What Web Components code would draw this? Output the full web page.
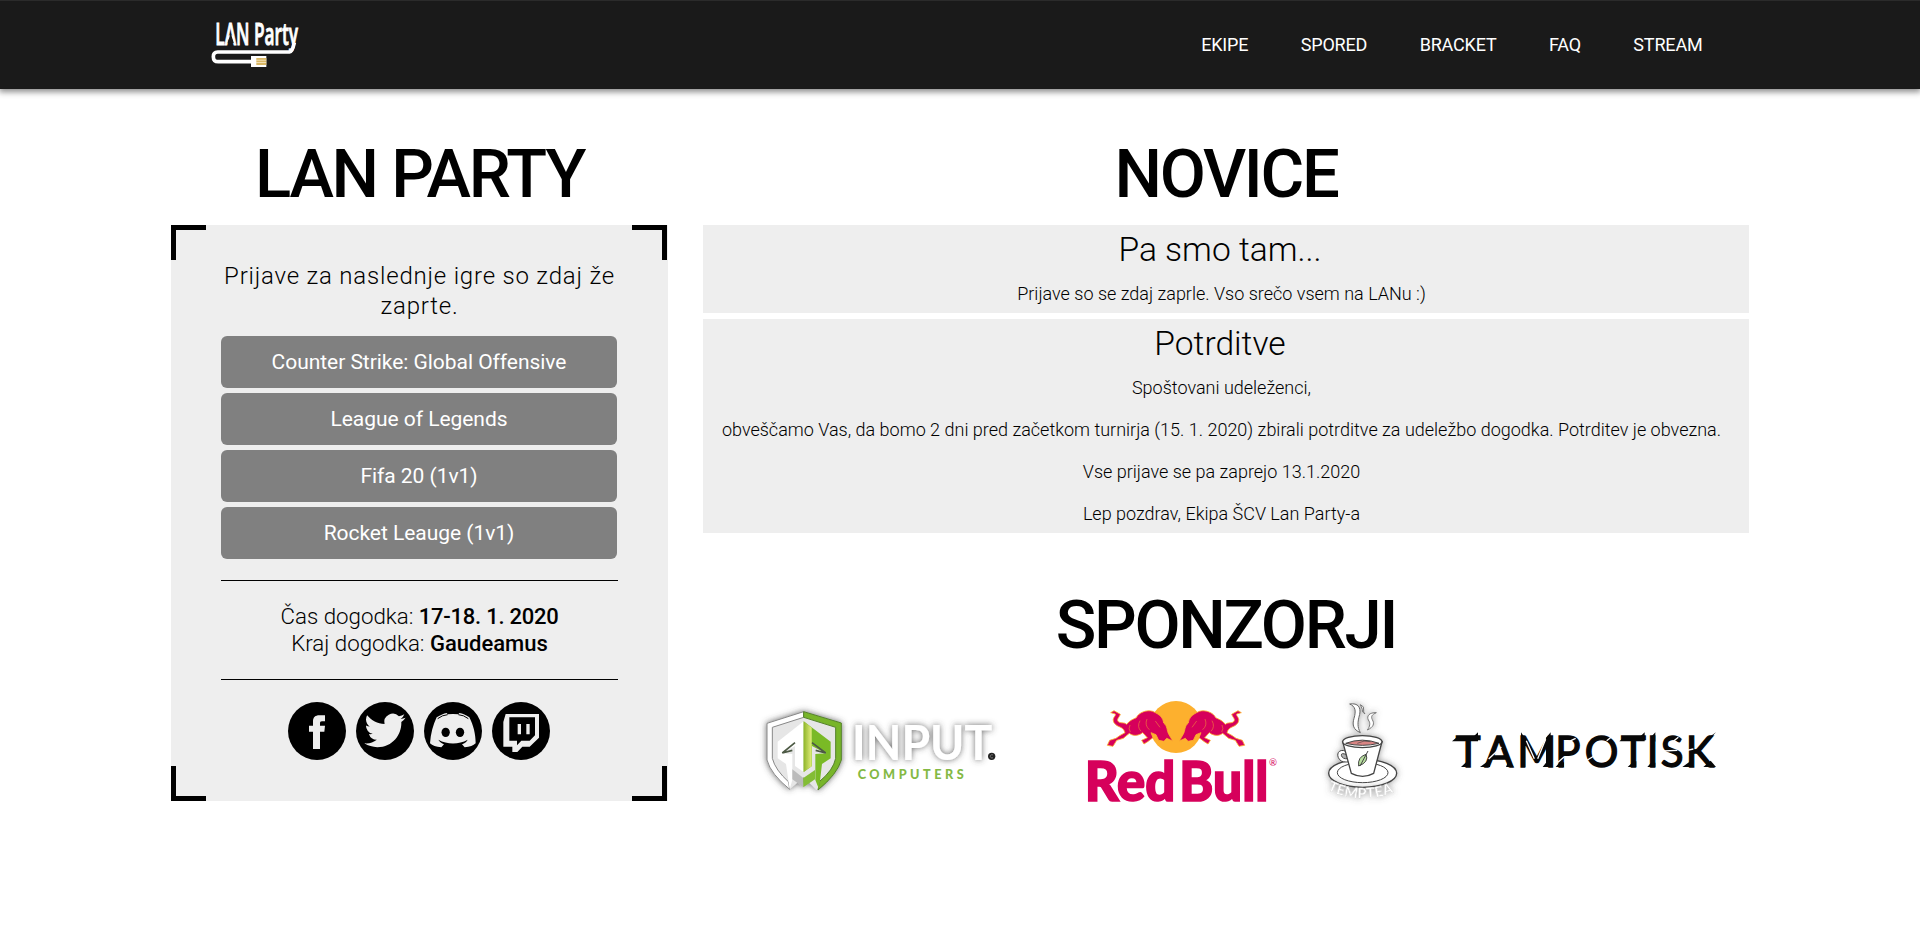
<!DOCTYPE html>
<html lang="sl">
<head>
<meta charset="utf-8">
<title>LAN Party</title>
<style>
body{margin:0;background:#fff;color:#000;font-family:Roboto,"Liberation Sans",sans-serif}
</style>
</head>
<body>
<lan-page></lan-page>
<script>
const define=(name,html)=>{
  const t=document.createElement('template');t.innerHTML=html;
  customElements.define(name,class extends HTMLElement{
    constructor(){super();this.attachShadow({mode:'open'}).appendChild(t.content.cloneNode(true));}
  });
};

define('lan-logo',`<style>:host{display:block;width:130px;height:88px}svg{display:block;overflow:visible}</style>
<svg width="130" height="88" viewBox="0 0 390 264">
<text x="76" y="136" font-family="Open Sans" font-weight="600" font-size="94" fill="#fff" stroke="#fff" stroke-width="3" textLength="248" lengthAdjust="spacingAndGlyphs">LAN Party</text>
<path d="M122 98L113 129H131Z" fill="#1a1a1a"/>
<path d="M313 128Q307 156 299 156H83Q70 156 70 170Q70 185 85 185H186" fill="none" stroke="#fff" stroke-width="11"/>
<rect x="183" y="168" width="46" height="33" fill="#fff"/>
<path d="M199 174h30v6h-30zM199 181h30v6h-30zM199 188h30v7h-30z" fill="#d9b765"/>
<path d="M199 180.500h30M199 187.500h30" stroke="#f4e3b5" stroke-width="2"/>
</svg>`);

define('nav-link',`<style>:host{display:block;font-size:18px;line-height:22px;color:#fff;letter-spacing:-.17px}</style><slot></slot>`);

define('site-header',`<style>
:host{display:flex;box-sizing:border-box;height:89px;background:#1a1a1a;border-top:1px solid #2b2b2b;box-shadow:0 2px 6px 1px rgba(0,0,0,.45);justify-content:space-between;padding:0 217.500px 0 190px}
nav{display:flex;gap:52.4px;padding-top:33px}
lan-logo{margin-top:-1px}
</style><lan-logo></lan-logo><nav><slot></slot></nav>`);

define('section-title',`<style>:host{display:block;text-align:center}
h1{margin:0;font-size:67px;line-height:80px;font-weight:500;letter-spacing:-2.3px}</style><h1><slot></slot></h1>`);

define('game-button',`<style>:host{display:block;height:51.5px;box-sizing:border-box;background:#808080;border-radius:6px;color:#fff;font-size:21px;line-height:53px;letter-spacing:-.04px;text-align:center}</style><slot></slot>`);

define('social-icon',`<style>:host{display:block;width:58px;height:58px}::slotted(svg){display:block;width:58px;height:58px}</style><slot></slot>`);

define('event-card',`<style>
:host{display:block;position:relative;box-sizing:border-box;height:576px;background:#eee;padding:36px 50px 0;text-align:center}
i{position:absolute;width:35px;height:35px;box-sizing:border-box;border:0 solid #000}
.a{left:0;top:0;border-width:5px 0 0 5px}.b{right:1px;top:0;border-width:5px 5px 0 0}
.c{left:0;bottom:0;border-width:0 0 5px 5px}.d{right:1px;bottom:0;border-width:0 5px 5px 0}
.intro{margin:0 -2px 15px;font-size:24px;line-height:30px;letter-spacing:.8px;font-weight:300}
.games{display:grid;gap:5.5px;margin-right:1px}
hr{border:0;height:1px;background:#000;margin:21.500px 0 0}
.info{font-size:22.3px;line-height:27px;margin:22px 0;font-weight:300}
hr.two{margin:0}
.soc{display:flex;gap:10px;justify-content:center;margin:22px 2px 0 0}
</style><i class="a"></i><i class="b"></i><i class="c"></i><i class="d"></i>
<div class="intro"><slot name="intro"></slot></div>
<div class="games"><slot name="game"></slot></div><hr>
<div class="info"><slot name="info"></slot></div><hr class="two">
<div class="soc"><slot name="social"></slot></div>`);

define('news-item',`<style>
:host{display:block;background:#eee;padding:6px 9px 8px 0;text-align:center;font-size:18px;line-height:22px;font-weight:300}
h2{margin:0 3px 14px 0;font-size:33.6px;line-height:38px;font-weight:300}
.body{display:grid;gap:20px}::slotted(p){margin:0}
</style><h2><slot name="title"></slot></h2><div class="body"><slot></slot></div>`);

define('sponsor-row',`<style>:host{display:flex;margin:25px 0 0 47px}svg{display:block;flex:none;overflow:visible}.rb{margin:0 10px 0 60px}</style>
<svg width="260" height="120" viewBox="0 0 780 360">
<defs><filter id="g" x="-20%" y="-20%" width="140%" height="140%"><feDropShadow dx="0" dy="0" stdDeviation="9" flood-color="#444" flood-opacity=".8"/></filter>
<linearGradient id="l"><stop offset="0" stop-color="#8fb52a"/><stop offset="1" stop-color="#e2ee7b"/></linearGradient></defs>
<g filter="url(#g)">
<path d="M161 65L51 100V210Q62 252 119 298L161 262L200 300Q265 250 274 210V99Z" fill="#e6e6e6"/>
<path d="M161 65L51 100V210Q62 252 119 298L116 276Q76 240 67 205V112L161 82Z" fill="#fff" stroke="#888" stroke-width="3"/>
<path d="M161 65L274 99V210Q262 252 204 300L209 274Q250 240 257 205V112L161 82Z" fill="#78b52b" stroke="#55812a" stroke-width="3"/>
<path d="M161 94L83 155V205L108 222L119 298L127 270V192L97 190L135 168V228L161 246Z" fill="#fff"/>
<path d="M161 94L242 155V205L216 222L207 298L196 270V192L227 190L186 168V228L161 246Z" fill="#7aba28"/>
<path d="M161 94V246L185 229V113Z" fill="url(#l)"/>
<path d="M135 158L97 189L127 181M186 158L227 189L197 181" fill="none" stroke="#4d5a45" stroke-width="5"/>
<path d="M127 238L160 264V292L127 268Z" fill="#bbb"/><path d="M160 264L195 240V268L160 292Z" fill="#83bd36"/>
</g>
<g filter="url(#g)"><text x="306" y="210" font-family="Lato" font-weight="700" font-size="145" fill="#fff" textLength="421" lengthAdjust="spacingAndGlyphs">INPUT</text></g>
<circle cx="725" cy="199" r="11" fill="#222"/><path d="M729 195a5 5 0 1 0 0 8" fill="none" stroke="#999" stroke-width="2"/>
<text x="323" y="267" font-family="Lato" font-weight="900" font-size="38" fill="#84b944" textLength="318">COMPUTERS</text>
</svg>
<svg class="rb" width="220" height="120" viewBox="0 0 660 360">
<circle cx="318" cy="111" r="78" fill="#fdb02e"/>
<g fill="#d6005b" stroke="#fdb02e" stroke-width="2.500">
<path d="M165 128C160 108 143 114 132 98C124 84 139 78 136 72L122 68L132 62L151 73C147 84 138 88 146 96C156 101 163 96 170 103C178 92 188 88 199 83C205 68 231 58 248 64C270 74 279 83 281 99C293 108 290 122 296 132Q302 143 309 154Q298 148 290 145L282 154L266 151L258 134L243 128L249 143L233 155L222 162L215 151L232 143L218 128C204 139 187 138 178 130L160 145L140 151L129 169L112 166L119 151L138 145L149 137Z"/>
<path d="M210 92Q200 110 213 124M231 87Q223 106 238 119M180 105Q174 117 181 126M256 93L270 112" fill="none" stroke="#ef7b3d" stroke-width="2"/>
</g>
<g fill="#d6005b" stroke="#fdb02e" stroke-width="2.500" transform="matrix(-1 0 0 1 636 0)">
<path d="M165 128C160 108 143 114 132 98C124 84 139 78 136 72L122 68L132 62L151 73C147 84 138 88 146 96C156 101 163 96 170 103C178 92 188 88 199 83C205 68 231 58 248 64C270 74 279 83 281 99C293 108 290 122 296 132Q302 143 309 154Q298 148 290 145L282 154L266 151L258 134L243 128L249 143L233 155L222 162L215 151L232 143L218 128C204 139 187 138 178 130L160 145L140 151L129 169L112 166L119 151L138 145L149 137Z"/>
<path d="M210 92Q200 110 213 124M231 87Q223 106 238 119M180 105Q174 117 181 126M256 93L270 112" fill="none" stroke="#ef7b3d" stroke-width="2"/>
</g>
<g font-family="Lato" font-weight="900" font-size="164" fill="#d6005b" stroke="#d6005b" stroke-width="5"><text x="44" y="332" textLength="272" lengthAdjust="spacingAndGlyphs">Red</text><text x="328" y="332" textLength="267" lengthAdjust="spacingAndGlyphs">Bull</text></g>
<text x="597" y="228" font-family="Lato" font-size="30" fill="#d6005b" textLength="24" lengthAdjust="spacingAndGlyphs">®</text>
</svg>
<svg width="130" height="120" viewBox="0 0 390 360">
<defs><filter id="h" x="-20%" y="-20%" width="140%" height="140%"><feDropShadow dx="0" dy="0" stdDeviation="9" flood-color="#555" flood-opacity=".6"/></filter></defs>
<g filter="url(#h)" fill="#fff" stroke="#444" stroke-width="4">
<ellipse cx="188" cy="250" rx="102" ry="42"/><ellipse cx="188" cy="248" rx="76" ry="30" stroke-width="3"/>
<path d="M138 184C116 174 106 194 119 209Q128 219 148 215L144 206Q127 208 124 196Q123 187 140 194Z" stroke-width="3"/>
<path d="M128 155L154 250Q188 268 221 250L246 155Z"/><ellipse cx="187" cy="155" rx="59" ry="18"/>
<path d="M137 160Q187 141 237 160Q187 172 137 160Z" fill="#d98584" stroke-width="3"/><path d="M172 160Q192 149 212 155" fill="none" stroke-width="2"/>
<path d="M149 42C175 38 183 53 179 73C172 98 172 111 181 128C160 119 156 105 162 85C169 62 166 49 149 42Z" stroke-width="3" stroke="#666"/>
<path d="M229 68C208 67 199 78 205 90C212 99 210 109 202 120C221 111 224 101 217 89C212 79 216 74 229 68ZM181 44Q194 49 191 60Q189 66 195 72Q184 66 187 58Z" stroke-width="3" stroke="#777"/>
<path d="M176 228Q172 201 198 193Q208 216 176 228Z" fill="#b8dfa0" stroke-width="3"/><path d="M180 228L204 183" fill="none" stroke-width="3"/>
</g>
<g filter="url(#h)" fill="#fff" stroke="#ccc" stroke-width="1" font-family="Lato" font-weight="700" font-size="43">
<path id="arc" d="M82 300Q188 350 298 300" fill="none" stroke="none"/><text textLength="205"><textPath href="#arc">TEMPTEA</textPath></text></g>
</svg>
<svg width="300" height="100" viewBox="0 0 900 300" style="margin-top:10px">
<g font-family="Lato" font-weight="400" font-size="126" fill="#080808" stroke="#080808" stroke-width="4">
<text y="200" x="77 164 262 376 464 573 650 692 767">TAMPOTISK</text></g>
<g fill="#080808"><path d="M66 124L82 110H130L144 97V124ZM568 124L584 110H630L644 97V124ZM93 201L111 184H119V201ZM593 201L611 184H619V201ZM150 201L180 179V201ZM236 180L251 201H228ZM377 201L389 187H402V201ZM652 201L663 188H676V201ZM664 110L676 97V125ZM757 201L782 183V201ZM820 201L842 182L858 201ZM818 125L858 97L832 124ZM273 112V97L286 116V201H273ZM348 113L362 97V201H338L348 188Z"/></g>
<g stroke="#fff" stroke-width="4" fill="none"><path d="M176 177L214 141M289 122L313 176M347 118L323 176M410 128L437 115M472 180L492 168M530 122L548 108M698 153L742 151M771 151L790 147M384 187L402 171M728 125L745 112"/></g>
</svg>`);

define('lan-page',`<style>
:host{display:block;min-height:938px}
main{display:flex;gap:35px;padding:45px 171px 0}
aside{width:497px}.right{width:1046px}
section-title{margin-bottom:11px}
.news{display:grid;gap:6px}
.sp{margin:52px 0 0;display:block}
b{font-weight:500;font-size:22px}.date{letter-spacing:-.25px}
</style>
<site-header><nav-link>EKIPE</nav-link><nav-link>SPORED</nav-link><nav-link>BRACKET</nav-link><nav-link>FAQ</nav-link><nav-link>STREAM</nav-link></site-header>
<main>
<aside><section-title>LAN PARTY</section-title>
<event-card>
<span slot="intro">Prijave za naslednje igre so zdaj že zaprte.</span>
<game-button slot="game">Counter Strike: Global Offensive</game-button>
<game-button slot="game">League of Legends</game-button>
<game-button slot="game">Fifa 20 (1v1)</game-button>
<game-button slot="game">Rocket Leauge (1v1)</game-button>
<span slot="info">Čas dogodka: <b class="date">17-18. 1. 2020</b><br>Kraj dogodka: <b>Gaudeamus</b></span>
<social-icon slot="social"><svg viewBox="0 0 174 174"><circle cx="87" cy="87" r="87"/><path fill="#eee" d="M75 141V89H63V71H75V58C75 46 82 40 94 40H111V58H102C97 58 96 60 96 65V71H111L109 89H96V141Z"/></svg></social-icon>
<social-icon slot="social"><svg viewBox="0 0 174 174"><circle cx="87" cy="87" r="87"/><path fill="#eee" transform="translate(25 23.400) scale(5.150)" d="M23.953 4.57a10 10 0 01-2.825.775 4.958 4.958 0 002.163-2.723c-.951.555-2.005.959-3.127 1.184a4.92 4.92 0 00-8.384 4.482C7.69 8.095 4.067 6.13 1.64 3.162a4.822 4.822 0 00-.666 2.475c0 1.71.87 3.213 2.188 4.096a4.904 4.904 0 01-2.228-.616v.06a4.923 4.923 0 003.946 4.827 4.996 4.996 0 01-2.212.085 4.936 4.936 0 004.604 3.417 9.867 9.867 0 01-6.102 2.105c-.39 0-.779-.023-1.17-.067a13.995 13.995 0 007.557 2.209c9.053 0 13.998-7.496 13.998-13.985 0-.21 0-.42-.015-.63A9.935 9.935 0 0024 4.59z"/></svg></social-icon>
<social-icon slot="social"><svg viewBox="0 0 174 174"><circle cx="87" cy="87" r="87"/><path fill="#eee" d="M38 46C50 39 59 34 68 33L71 37Q87 35 103 37L106 33C116 34 126 39 136 46C148 70 155 95 155 124C148 131 138 135 122 136L114 127C122 124 128 120 131 113C104 128 70 128 43 113C47 120 53 124 60 127L52 136C36 135 25 131 18 124C20 95 27 70 38 46Z"/><path d="M41 50Q55 39 71 38M133 50Q119 39 103 38" fill="none" stroke="#000" stroke-width="3"/><ellipse cx="65" cy="91" rx="12.500" ry="14"/><ellipse cx="108" cy="91" rx="12.500" ry="14"/></svg></social-icon>
<social-icon slot="social"><svg viewBox="0 0 174 174"><circle cx="87" cy="87" r="87"/><path fill="#eee" d="M41 36H141V107L113 134H91L76 150H61V134H34V60Z"/><path d="M52 46H129V100L113 116H88L75 130V116H52Z"/><path fill="#eee" d="M77 66h10v31h-10zM103 66h10v31h-10z"/></svg></social-icon>
</event-card></aside>
<div class="right"><section-title>NOVICE</section-title>
<div class="news">
<news-item><span slot="title">Pa smo tam...</span><p>Prijave so se zdaj zaprle. Vso srečo vsem na LANu :)</p></news-item>
<news-item><span slot="title">Potrditve</span><p>Spoštovani udeleženci,</p><p>obveščamo Vas, da bomo 2 dni pred začetkom turnirja (15. 1. 2020) zbirali potrditve za udeležbo dogodka. Potrditev je obvezna.</p><p>Vse prijave se pa zaprejo 13.1.2020</p><p>Lep pozdrav, Ekipa ŠCV Lan Party-a</p></news-item>
</div>
<section-title class="sp">SPONZORJI</section-title>
<sponsor-row></sponsor-row>
</div>
</main>`);
</script>
</body>
</html>
